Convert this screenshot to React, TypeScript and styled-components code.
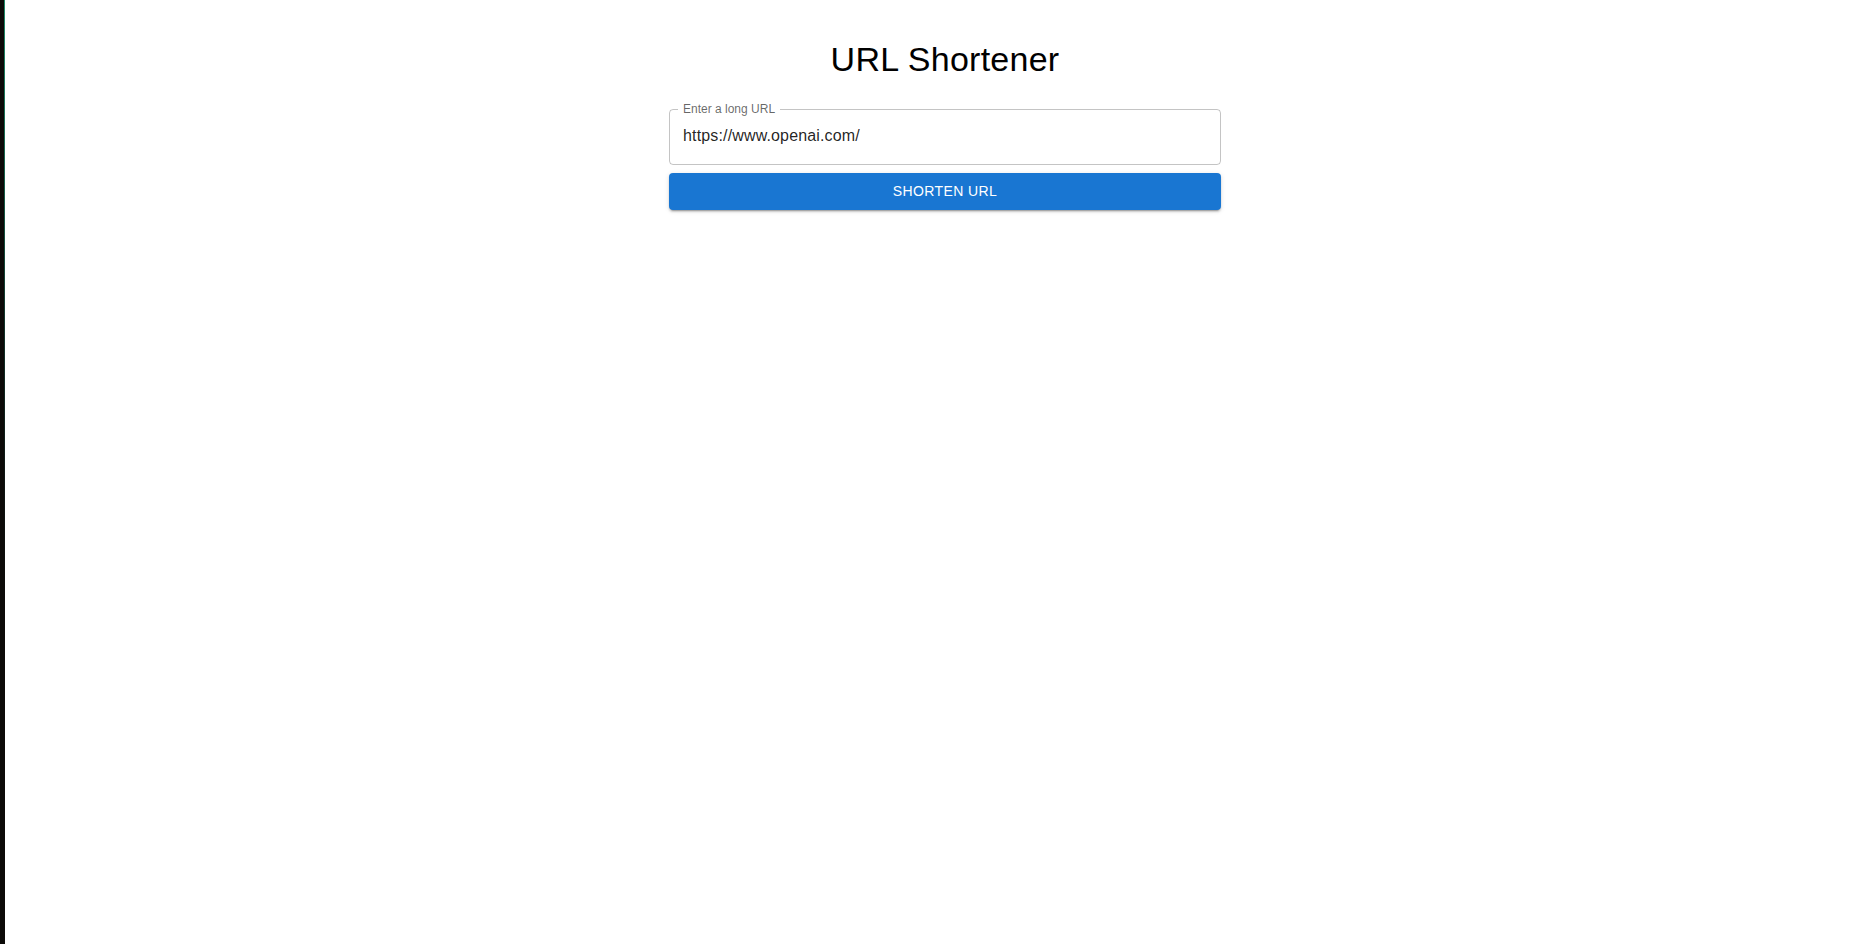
import React from "react";
import styled, { createGlobalStyle } from "styled-components";

const GlobalStyle = createGlobalStyle`
  html, body {
    margin: 0;
    padding: 0;
    background: #ffffff;
    font-family: "Liberation Sans", Arial, Helvetica, sans-serif;
  }
  * { box-sizing: border-box; }
`;

const Page = styled.div`
  display: flex;
  flex-direction: row;
  width: 100%;
  min-height: 100vh;
  background: #ffffff;
`;

const DarkStrip = styled.div`
  width: 4px;
  flex: none;
  background: #0c0a08;
`;

const EdgeLine = styled.div`
  width: 1px;
  flex: none;
  background: linear-gradient(
    to bottom,
    #1f8a68 0px,
    #17604a 180px,
    #12332a 330px,
    #0e1613 480px,
    #0c0a08 600px
  );
`;

const Main = styled.main`
  flex: 1;
  padding: 38px 0 0 23px;
  display: flex;
  flex-direction: column;
  align-items: center;
`;

const Container = styled.div`
  width: 552px;
  display: flex;
  flex-direction: column;
`;

const Title = styled.h1`
  margin: 0;
  font-family: "Liberation Sans", Arial, Helvetica, sans-serif;
  font-size: 34px;
  font-weight: 400;
  line-height: 42px;
  letter-spacing: 0.25px;
  color: #000000;
  text-align: center;
`;

const Field = styled.div`
  position: relative;
  margin-top: 29px;
  height: 56px;
  border: 1px solid rgba(0, 0, 0, 0.23);
  border-radius: 4px;
  display: flex;
  align-items: center;
`;

const FieldLabel = styled.label`
  position: absolute;
  top: -7px;
  left: 8px;
  padding: 0 5px;
  background: #ffffff;
  font-family: "Liberation Sans", Arial, Helvetica, sans-serif;
  font-size: 12px;
  line-height: 12px;
  color: rgba(0, 0, 0, 0.6);
  white-space: nowrap;
`;

const Input = styled.input`
  width: 100%;
  height: 100%;
  border: 0;
  outline: none;
  background: transparent;
  padding: 0 13px 2px 13px;
  font-family: "Liberation Sans", Arial, Helvetica, sans-serif;
  font-size: 16px;
  letter-spacing: 0.15px;
  color: rgba(0, 0, 0, 0.87);
`;

const Button = styled.button`
  margin-top: 8px;
  height: 36.5px;
  width: 100%;
  border: 0;
  border-radius: 4px;
  background: #1976d2;
  color: #ffffff;
  font-family: "Liberation Sans", Arial, Helvetica, sans-serif;
  font-size: 14px;
  font-weight: 500;
  letter-spacing: 0.4px;
  text-transform: uppercase;
  cursor: pointer;
  box-shadow: 0px 3px 1px -2px rgba(0, 0, 0, 0.2),
    0px 2px 2px 0px rgba(0, 0, 0, 0.14), 0px 1px 5px 0px rgba(0, 0, 0, 0.12);
`;

export default function App() {
  return (
    <Page>
      <GlobalStyle />
      <DarkStrip />
      <EdgeLine />
      <Main>
        <Container>
          <Title>URL Shortener</Title>
          <Field>
            <FieldLabel htmlFor="long-url">Enter a long URL</FieldLabel>
            <Input id="long-url" defaultValue="https://www.openai.com/" />
          </Field>
          <Button type="button">Shorten URL</Button>
        </Container>
      </Main>
    </Page>
  );
}
